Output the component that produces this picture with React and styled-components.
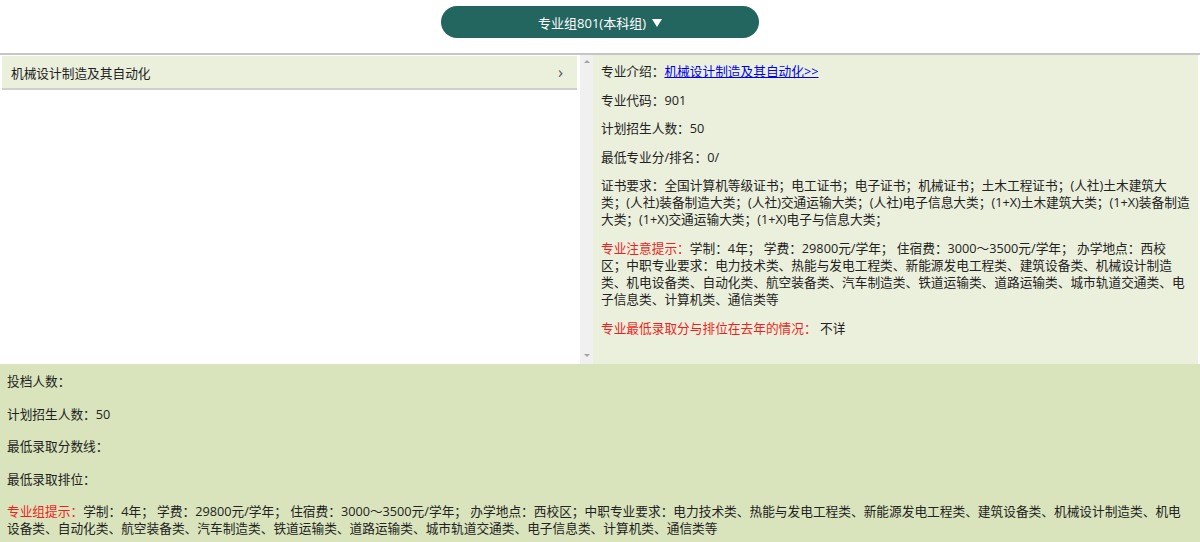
import React from "react";
import styled, { createGlobalStyle } from "styled-components";

const Global = createGlobalStyle`
  html, body { margin: 0; padding: 0; background: #fff; }
  body {
    font-family: "Open Sans", "Noto Sans CJK SC", "Noto Sans", sans-serif;
    font-size: 12.7px;
    color: #222;
  }
`;

const Page = styled.div`
  width: 1200px;
  height: 542px;
  overflow: hidden;
  display: flex;
  flex-direction: column;
`;

const Header = styled.header`
  height: 55px;
  flex-shrink: 0;
  display: flex;
  justify-content: center;
  align-items: flex-start;
  padding-top: 6px;
  box-sizing: border-box;
  border-bottom: 2px solid #c6c6c6;
`;

const GroupButton = styled.button`
  width: 318px;
  height: 32px;
  border: none;
  border-radius: 16px;
  background: #236660;
  color: #fff;
  font-family: inherit;
  font-size: 13px;
  display: flex;
  align-items: center;
  justify-content: center;
  gap: 6px;
  cursor: pointer;
`;

const Caret = styled.span`
  display: inline-block;
  width: 0;
  height: 0;
  border-left: 5px solid transparent;
  border-right: 5px solid transparent;
  border-top: 8px solid #fff;
  margin-top: 1px;
`;

const Main = styled.div`
  height: 309px;
  display: flex;
  padding: 0 2px 0 2px;
  flex-shrink: 0;
`;

const LeftPanel = styled.div`
  width: 591px;
  display: flex;
`;

const List = styled.ul`
  flex: 1;
  margin: 0;
  padding: 0 3px 0 0;
  list-style: none;
`;

const ListRow = styled.li`
  height: 32px;
  display: flex;
  align-items: center;
  justify-content: space-between;
  padding: 0 14px 0 9px;
  background: #ebf0dc;
  border-bottom: 2px solid #cfcfcf;
  margin-top: 1px;
  color: #222;
`;

const Chevron = styled.span`
  color: #555;
  font-size: 17px;
  line-height: 1;
  margin-top: -2px;
`;

const ScrollTrack = styled.div`
  width: 13px;
  background: #f0f0f0;
  display: flex;
  flex-direction: column;
  justify-content: space-between;
  align-items: center;
  padding: 5px 0 7px;
  box-sizing: border-box;
`;

const Arrow = styled.span`
  width: 0;
  height: 0;
  border-left: 3px solid transparent;
  border-right: 3px solid transparent;
  ${(p) =>
    p.$down
      ? "border-top: 3px solid #a3a3a3;"
      : "border-bottom: 3px solid #a3a3a3;"}
`;

const Detail = styled.div`
  flex: 1;
  background: #ebf0dc;
  padding: 8px 8px 0 8px;
  box-sizing: border-box;
`;

const Para = styled.p`
  margin: 0 0 ${(p) => p.$gap || "11.6px"};
  line-height: 17px;
`;

const Red = styled.span`
  color: #f01e1e;
`;

const Link = styled.a`
  color: #0000ee;
  text-decoration: underline;
`;

const Summary = styled.section`
  flex: 1;
  background: #d9e4bc;
  padding: 9px 7px 0 7px;
  box-sizing: border-box;
`;

const tip =
  "学制：4年； 学费：29800元/学年； 住宿费：3000～3500元/学年； 办学地点：西校区；中职专业要求：电力技术类、热能与发电工程类、新能源发电工程类、建筑设备类、机械设计制造类、机电设备类、自动化类、航空装备类、汽车制造类、铁道运输类、道路运输类、城市轨道交通类、电子信息类、计算机类、通信类等";

export default function App() {
  return (
    <>
      <Global />
      <Page>
        <Header>
          <GroupButton>
            专业组801(本科组) <Caret />
          </GroupButton>
        </Header>
        <Main>
          <LeftPanel>
            <List>
              <ListRow>
                <span>机械设计制造及其自动化</span>
                <Chevron>›</Chevron>
              </ListRow>
            </List>
            <ScrollTrack>
              <Arrow />
              <Arrow $down />
            </ScrollTrack>
          </LeftPanel>
          <Detail>
            <Para>
              专业介绍：<Link href="#">机械设计制造及其自动化&gt;&gt;</Link>
            </Para>
            <Para>专业代码：901</Para>
            <Para>计划招生人数：50</Para>
            <Para>最低专业分/排名：0/</Para>
            <Para>
              证书要求：全国计算机等级证书；电工证书；电子证书；机械证书；土木工程证书；(人社)土木建筑大类；(人社)装备制造大类；(人社)交通运输大类；(人社)电子信息大类；(1+X)土木建筑大类；(1+X)装备制造大类；(1+X)交通运输大类；(1+X)电子与信息大类；
            </Para>
            <Para>
              <Red>专业注意提示：</Red>
              {tip}
            </Para>
            <Para>
              <Red>专业最低录取分与排位在去年的情况：</Red> 不详
            </Para>
          </Detail>
        </Main>
        <Summary>
          <Para $gap="15.5px">投档人数：</Para>
          <Para $gap="15.5px">计划招生人数：50</Para>
          <Para $gap="15.5px">最低录取分数线：</Para>
          <Para $gap="15.5px">最低录取排位：</Para>
          <Para $gap="15.5px">
            <Red>专业组提示：</Red>
            {tip}
          </Para>
        </Summary>
      </Page>
    </>
  );
}
